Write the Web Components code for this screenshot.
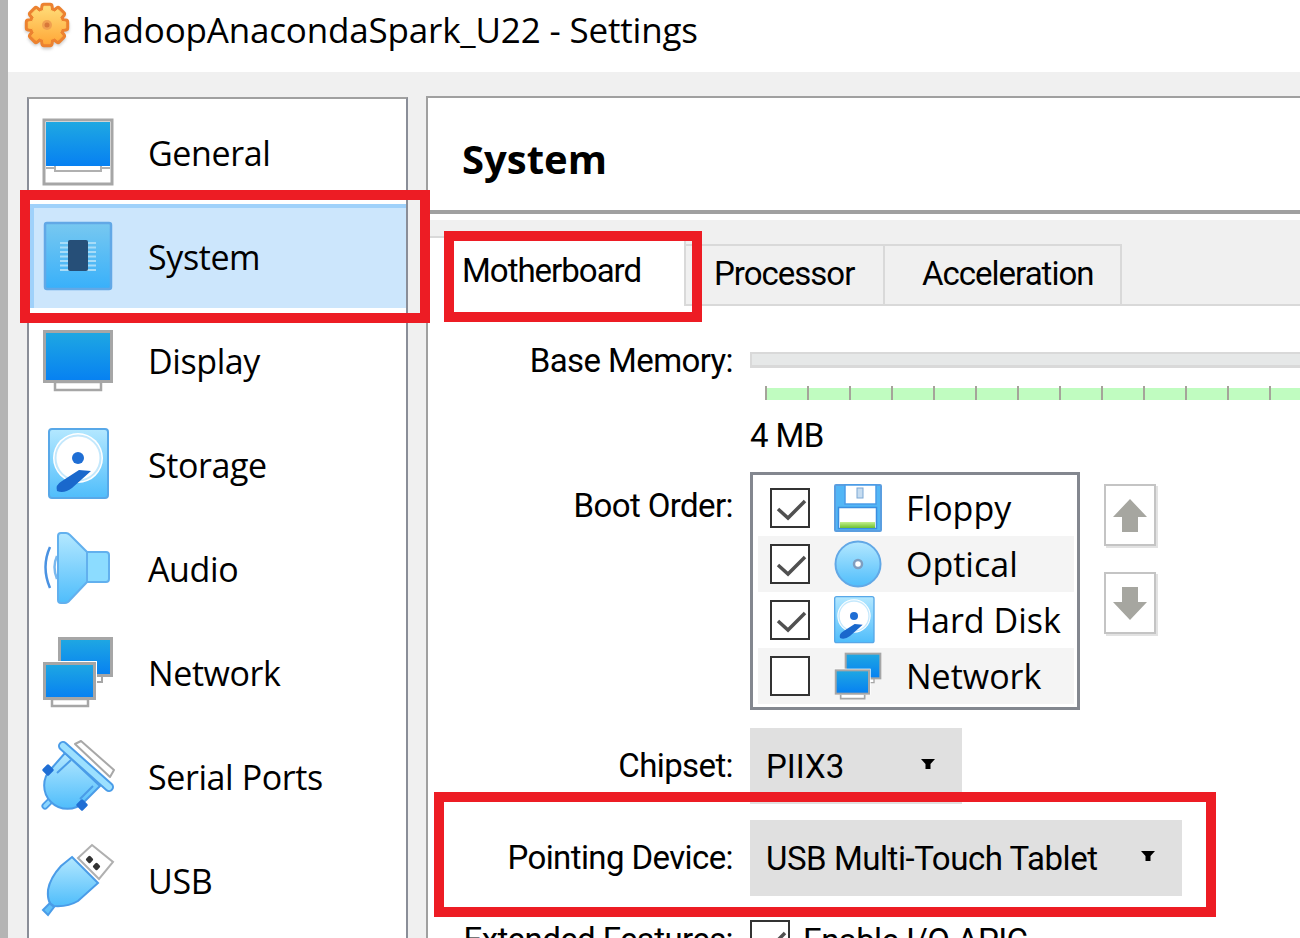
<!DOCTYPE html>
<html>
<head>
<meta charset="utf-8">
<title>hadoopAnacondaSpark_U22 - Settings</title>
<style>
  html, body { margin: 0; padding: 0; }
  body {
    width: 1300px; height: 938px; overflow: hidden;
    font-family: "Open Sans", "Noto Sans", "Liberation Sans", sans-serif;
    font-size: 34px; color: #000;
  }
  span[slot="title"] { font-size: 35px; letter-spacing: -.18px; }
</style>
</head>
<body>

<vb-window>
  <vb-icon slot="logo" name="gear" size="48" style="margin-bottom:9px"></vb-icon>
  <span slot="title">hadoopAnacondaSpark_U22 - Settings</span>

  <vb-sidebar slot="nav">
    <vb-nav-item icon="general">General</vb-nav-item>
    <vb-nav-item icon="system" selected>System</vb-nav-item>
    <vb-nav-item icon="display">Display</vb-nav-item>
    <vb-nav-item icon="storage">Storage</vb-nav-item>
    <vb-nav-item icon="audio">Audio</vb-nav-item>
    <vb-nav-item icon="network">Network</vb-nav-item>
    <vb-nav-item icon="serial">Serial Ports</vb-nav-item>
    <vb-nav-item icon="usb">USB</vb-nav-item>
  </vb-sidebar>

  <vb-pane slot="main" heading="System">
    <vb-tabs>
      <vb-tab selected style="width:258px;padding-left:34px">Motherboard</vb-tab>
      <vb-tab style="width:199px;padding-left:28px">Processor</vb-tab>
      <vb-tab style="width:237px;padding-left:37px">Acceleration</vb-tab>
    </vb-tabs>
    <vb-form>
      <vb-row label="Base Memory:" label-top="-11" style="margin-top:46px">
        <vb-slider>4 MB</vb-slider>
      </vb-row>
      <vb-row label="Boot Order:" label-top="14" style="margin-top:14px">
        <vb-boot-order>
          <vb-boot-item checked icon="floppy">Floppy</vb-boot-item>
          <vb-boot-item checked icon="optical" alt>Optical</vb-boot-item>
          <vb-boot-item checked icon="harddisk">Hard Disk</vb-boot-item>
          <vb-boot-item icon="network" alt>Network</vb-boot-item>
        </vb-boot-order>
      </vb-row>
      <vb-row label="Chipset:" label-top="18" style="margin-top:18px">
        <vb-combo style="width:212px;letter-spacing:0">PIIX3</vb-combo>
      </vb-row>
      <vb-row label="Pointing Device:" label-top="18" style="margin-top:16px">
        <vb-combo style="width:432px;letter-spacing:-.45px">USB Multi-Touch Tablet</vb-combo>
      </vb-row>
      <vb-row label="Extended Features:" label-top="0" style="margin-top:24px">
        <vb-check checked>Enable I/O APIC</vb-check>
      </vb-row>
    </vb-form>
  </vb-pane>

  <vb-callout style="left:20px;top:190px;width:410px;height:133px"></vb-callout>
  <vb-callout style="left:444px;top:231px;width:258px;height:91px"></vb-callout>
  <vb-callout style="left:434px;top:792px;width:782px;height:125px"></vb-callout>
</vb-window>

<script>
  // shared gradients for the VirtualBox style icons
  const GRADS = `
    <defs>
      <linearGradient id="screen" x1="0" y1="0" x2="0" y2="1"><stop offset="0" stop-color="#1fa8e2"/><stop offset="1" stop-color="#0680f2"/></linearGradient>
      <linearGradient id="sky" x1="0" y1="0" x2="0" y2="1"><stop offset="0" stop-color="#b4e8ff"/><stop offset="1" stop-color="#4fbdfb"/></linearGradient>
      <linearGradient id="tile" x1="0" y1="0" x2="0" y2="1"><stop offset="0" stop-color="#78c8f0"/><stop offset="1" stop-color="#38b0fa"/></linearGradient>
      <linearGradient id="green" x1="0" y1="0" x2="0" y2="1"><stop offset="0" stop-color="#c4f08c"/><stop offset="1" stop-color="#6cc030"/></linearGradient>
      <linearGradient id="gold" x1="0" y1="0" x2="0" y2="1"><stop offset="0" stop-color="#ffdc78"/><stop offset="1" stop-color="#ffa838"/></linearGradient>
      <filter id="soft" x="-20%" y="-20%" width="140%" height="140%"><feGaussianBlur stdDeviation="1.6"/></filter>
    </defs>`;

  function monitor(x, y, w, h) {
    return `<rect x="${x+1.5}" y="${y+1.5}" width="${w-3}" height="${h-3}" fill="url(#screen)" stroke="#a6a6a6" stroke-width="3"/>`;
  }

  // 8 toothed cog outline around 24,24
  function cog(cx, cy, outer, inner) {
    const pts = [];
    for (let i = 0; i < 8; i++) {
      const a = i * Math.PI / 4 - Math.PI / 2;
      const step = Math.PI / 8;
      [[outer, -step * .42], [outer, step * .42], [inner, step * .62], [inner, step * 1.38]].forEach(p => {
        pts.push((cx + p[0] * Math.cos(a + p[1])).toFixed(1) + "," + (cy + p[0] * Math.sin(a + p[1])).toFixed(1));
      });
    }
    return pts.join(" ");
  }

  const ICONS = {
    gear: [48, `
      <polygon points="${cog(24, 26, 20, 16)}" fill="#999" stroke="#999" stroke-width="5" stroke-linejoin="round" opacity=".5" filter="url(#soft)"/>
      <polygon points="${cog(24, 24, 19, 15)}" fill="#ec8230" stroke="#ec8230" stroke-width="7" stroke-linejoin="round"/>
      <polygon points="${cog(24, 24, 19, 15)}" fill="url(#gold)" stroke="url(#gold)" stroke-width="1" stroke-linejoin="round"/>
      <circle cx="24" cy="24" r="5" fill="#f0a050"/><circle cx="24" cy="24" r="2.500" fill="#d8783a"/>`],
    general: [72, `
      <path d="M2 4h68v64H2z" fill="#fff" stroke="#a6a6a6" stroke-width="3"/>
      <rect x="4" y="6" width="64" height="44" fill="url(#screen)"/>
      <path d="M13 50v5h46v-5M4 52h9M59 52h9" fill="none" stroke="#b0b0b0" stroke-width="2"/>`],
    system: [72, `
      <rect x="3" y="3" width="66" height="66" rx="2" fill="url(#tile)" stroke="#62a8e6" stroke-width="2.5"/>
      <path d="M18 23h36M18 27.5h36M18 32h36M18 36.500h36M18 41h36M18 45.500h36M18 50h36" stroke="#a8dcf8" stroke-width="2.2"/>
      <rect x="26" y="20" width="20" height="31" rx="2" fill="#264f78"/>`],
    display: [72, `
      <path d="M13 58h46v8H13z" fill="#fff" stroke="#a6a6a6" stroke-width="2.500"/>
      ${monitor(1, 6, 70, 53)}`],
    storage: [72, `
      <rect x="7" y="1" width="59" height="69" rx="3" fill="url(#sky)" stroke="#58a8e8" stroke-width="2"/>
      <circle cx="36" cy="30" r="25" fill="#fff"/>
      <circle cx="36" cy="30" r="22.500" fill="none" stroke="#c4e8fc" stroke-width="2"/>
      <circle cx="36" cy="30" r="6" fill="#1f6ed4"/>
      <path d="M37 42 L49 43 L30 60 Q22 66 15 63 Q13 57 20 53 Z" fill="#1a68cc"/>`],
    harddisk: [72, `
      <rect x="1" y="1" width="59" height="69" rx="3" fill="url(#sky)" stroke="#58a8e8" stroke-width="2"/>
      <circle cx="30" cy="30" r="25" fill="#fff"/>
      <circle cx="30" cy="30" r="22.500" fill="none" stroke="#c4e8fc" stroke-width="2"/>
      <circle cx="30" cy="30" r="6" fill="#1f6ed4"/>
      <path d="M31 42 L43 43 L24 60 Q16 66 9 63 Q7 57 14 53 Z" fill="#1a68cc"/>`],
    audio: [72, `
      <path d="M8 15 Q-1 35 8 56" fill="none" stroke="#4a92e2" stroke-width="2.500"/>
      <path d="M15 24 Q10 35 15 47" fill="none" stroke="#7ab8ee" stroke-width="2.500"/>
      <path d="M45 20 H64 Q67 20 67 23 V47 Q67 50 64 50 H45 Z" fill="#8cdcff" stroke="#62b0ee" stroke-width="2"/>
      <path d="M16 4 Q16 1 19 1 H24 Q26 1 28 3 L45 20 V50 L28 68 Q26 71 23 71 H19 Q16 71 16 68 Z" fill="url(#sky)" stroke="#62b0ee" stroke-width="2"/>`],
    network: [72, `
      <path d="M42 40h18v6H42z" fill="#fff" stroke="#a6a6a6" stroke-width="2"/>
      ${monitor(16, 1, 55, 40)}
      <path d="M10 63h36v7H10z" fill="#fff" stroke="#a6a6a6" stroke-width="2.500"/>
      <rect x="0" y="25" width="55" height="39" fill="#fff"/>
      ${monitor(1, 26, 53, 38)}`],
    serial: [72, `
      <path d="M33 4 L39 1 L72 30 L68 37 Z" fill="#fff" stroke="#a8a8a8" stroke-width="2" stroke-linejoin="round"/>
      <path d="M11 58 L3 66" stroke="#4a9ce8" stroke-width="7" stroke-linecap="round"/>
      <path d="M11 58 L3 66" stroke="#8cd6ff" stroke-width="3.500" stroke-linecap="round"/>
      <path d="M9 29 L23 13 L58 46 L42 62 A18 18 0 0 1 9 29 Z" fill="url(#sky)" stroke="#4a9ce8" stroke-width="2"/>
      <path d="M15 33 L29 20 M51 46 L38 59" fill="none" stroke="#4a9ce8" stroke-width="2"/>
      <path d="M21 6 L67 47" stroke="#4a9ce8" stroke-width="10" stroke-linecap="round"/>
      <path d="M21 6 L67 47" stroke="#9ce0ff" stroke-width="6" stroke-linecap="round"/>
      <rect x="1.500" y="25.500" width="9" height="9" rx="1.500" fill="#1f6ed4" transform="rotate(45 6 30)"/>
      <rect x="35.500" y="60.500" width="9" height="9" rx="1.500" fill="#1f6ed4" transform="rotate(45 40 65)"/>`],
    usb: [72, `
      <path d="M50 1 L71 18 L57 35 L36 14 Z" fill="#fff" stroke="#b0b0b0" stroke-width="2"/>
      <rect x="44.500" y="12.500" width="6" height="6" rx="1.500" fill="#333" transform="rotate(45 47.500 15.500)"/>
      <rect x="51.500" y="19.500" width="6" height="6" rx="1.500" fill="#333" transform="rotate(45 54.500 22.500)"/>
      <path d="M1 66 L8 59 L12 63 L6 71 Z" fill="#60c0f8" stroke="#4a9ce8" stroke-width="2"/>
      <path d="M30 13 L56 39 L36 57 Q26 63 12 62 Q5 60 6 46 Q8 34 19 22 Z" fill="url(#sky)" stroke="#4a9ce8" stroke-width="2"/>`],
    floppy: [48, `
      <rect x="1" y="1" width="46" height="46" rx="1" fill="#52b6f6" stroke="#5a9ee0" stroke-width="2"/>
      <rect x="11" y="1" width="31" height="19" fill="#fff" stroke="#4a9ce8" stroke-width="1.500"/>
      <rect x="23" y="4" width="6" height="10" fill="#c6dcf0" stroke="#7ca8d4" stroke-width="1"/>
      <rect x="4.500" y="23.500" width="38" height="21" fill="#fff" stroke="#3a8ee0" stroke-width="1.500"/>
      <rect x="6" y="38" width="35" height="6" fill="url(#green)"/>`],
    optical: [48, `
      <circle cx="24" cy="24" r="22.500" fill="url(#sky)" stroke="#62a8e6" stroke-width="2"/>
      <circle cx="24" cy="24" r="4" fill="#fff" stroke="#7f9ec0" stroke-width="2.500"/>`]
  };

  class VbIcon extends HTMLElement {
    static observedAttributes = ["name"];
    constructor() {
      super();
      this.attachShadow({ mode: "open" });
    }
    attributeChangedCallback() { this.draw(); }
    connectedCallback() { this.draw(); }
    draw() {
      const entry = ICONS[this.getAttribute("name")];
      if (!entry) return;
      const size = this.getAttribute("size") || 72;
      this.shadowRoot.innerHTML = `
        <style>:host { display: block; width: ${size}px; height: ${size}px; flex: none; } svg { display: block; overflow: visible; }</style>
        <svg width="${size}" height="${size}" viewBox="0 0 ${entry[0]} ${entry[0]}">${GRADS}${entry[1]}</svg>`;
    }
  }
  customElements.define("vb-icon", VbIcon);

  class VbWindow extends HTMLElement {
    constructor() {
      super();
      this.attachShadow({ mode: "open" }).innerHTML = `
        <style>
          :host {
            display: flex; flex-direction: column; position: relative;
            box-sizing: border-box; width: 1300px; height: 938px; overflow: hidden;
            border-left: 8px solid #b4b4b4; background: #f0f0f0;
          }
          #bar { display: flex; align-items: center; gap: 11px; height: 72px; flex: none; padding: 0 0 14px 15px; box-sizing: border-box; background: #fff; }
          #body { display: flex; flex: 1; min-height: 0; gap: 18px; padding: 25px 0 0 19px; }
        </style>
        <div id="bar"><slot name="logo"></slot><slot name="title"></slot></div>
        <div id="body"><slot name="nav"></slot><slot name="main"></slot></div>
        <slot></slot>`;
    }
  }
  customElements.define("vb-window", VbWindow);

  class VbSidebar extends HTMLElement {
    constructor() {
      super();
      this.attachShadow({ mode: "open" }).innerHTML = `
        <style>
          :host {
            display: block; box-sizing: border-box; width: 381px; flex: none;
            padding: 1px 0 0 1px; background: #fff; letter-spacing: -.4px;
            border: 2px solid #8a8e98; border-top-color: #a0a0a0; border-bottom: 0;
            overflow: hidden;
          }
        </style>
        <slot></slot>`;
    }
  }
  customElements.define("vb-sidebar", VbSidebar);

  class VbNavItem extends HTMLElement {
    constructor() {
      super();
      this.attachShadow({ mode: "open" }).innerHTML = `
        <style>
          :host { display: flex; align-items: center; gap: 34px; height: 104px; padding-left: 12px; box-sizing: border-box; }
          :host([selected]) { background: #cce6fc; box-shadow: inset 4px 4px 0 #9fd1fa; }
          #text { padding-top: 2px; }
        </style>
        <vb-icon></vb-icon><div id="text"><slot></slot></div>`;
    }
    connectedCallback() {
      this.shadowRoot.querySelector("vb-icon").setAttribute("name", this.getAttribute("icon"));
    }
  }
  customElements.define("vb-nav-item", VbNavItem);

  class VbPane extends HTMLElement {
    constructor() {
      super();
      this.attachShadow({ mode: "open" }).innerHTML = `
        <style>
          :host {
            display: flex; flex-direction: column; flex: 1; min-width: 0; overflow: hidden; margin-top: -1px;
            background: #fff; border-left: 2px solid #a0a0a0; border-top: 2px solid #a0a0a0;
          }
          h2 {
            margin: 0; height: 116px; box-sizing: border-box; flex: none;
            border-bottom: 4px solid #a0a0a0; padding-left: 34px;
            font-size: 40px; font-weight: 700; line-height: 122px; color: #000;
          }
          #gap { height: 6px; flex: none; }
        </style>
        <h2></h2><div id="gap"></div><slot></slot>`;
    }
    connectedCallback() {
      this.shadowRoot.querySelector("h2").textContent = this.getAttribute("heading");
    }
  }
  customElements.define("vb-pane", VbPane);

  class VbTabs extends HTMLElement {
    constructor() {
      super();
      this.attachShadow({ mode: "open" }).innerHTML = `
        <style>
          :host {
            display: flex; align-items: flex-end; height: 86px; box-sizing: border-box; flex: none;
            background: #f0f0f0; border-bottom: 2px solid #d9d9d9;
            font-family: Roboto, "Open Sans", sans-serif; font-size: 33px; letter-spacing: -1px;
          }
        </style>
        <slot></slot>`;
    }
  }
  customElements.define("vb-tabs", VbTabs);

  class VbTab extends HTMLElement {
    constructor() {
      super();
      this.attachShadow({ mode: "open" }).innerHTML = `
        <style>
          :host {
            display: block; box-sizing: border-box; height: 60px; line-height: 56px; white-space: nowrap;
            border: 2px solid #d9d9d9; border-left: 0; border-bottom: 0; flex: none;
          }
          :host([selected]) {
            height: 70px; margin-bottom: -2px; line-height: 66px; background: #fff; position: relative;
          }
        </style>
        <slot></slot>`;
    }
  }
  customElements.define("vb-tab", VbTab);

  class VbForm extends HTMLElement {
    constructor() {
      super();
      this.attachShadow({ mode: "open" }).innerHTML = `
        <style>:host { display: flex; flex-direction: column; font-family: Roboto, "Open Sans", sans-serif; font-size: 33px; letter-spacing: -.6px; }</style><slot></slot>`;
    }
  }
  customElements.define("vb-form", VbForm);

  class VbRow extends HTMLElement {
    constructor() {
      super();
      this.attachShadow({ mode: "open" }).innerHTML = `
        <style>
          :host { display: grid; grid-template-columns: 305px minmax(0, 1fr); column-gap: 17px; align-items: start; }
          #label { text-align: right; line-height: 40px; white-space: nowrap; }
        </style>
        <div id="label"></div><div><slot></slot></div>`;
    }
    connectedCallback() {
      const l = this.shadowRoot.getElementById("label");
      l.textContent = this.getAttribute("label");
      l.style.marginTop = this.getAttribute("label-top") + "px";
    }
  }
  customElements.define("vb-row", VbRow);

  class VbSlider extends HTMLElement {
    constructor() {
      super();
      let ticks = "";
      for (let i = 0; i < 14; i++) ticks += `<i></i>`;
      this.attachShadow({ mode: "open" }).innerHTML = `
        <style>
          :host { display: block; }
          #groove { height: 16px; box-sizing: border-box; margin-right: -4px; background: #e6e8e8; border: 2px solid #d9d9d9; border-bottom-width: 3px; }
          #ticks { display: flex; height: 14px; margin: 18px 0 0 15px; }
          i { display: block; flex: none; width: 42px; box-sizing: border-box; border-left: 2px solid #a5a39a; background: linear-gradient(transparent 2px, #c0fcc0 2px); }
          #value { line-height: 44px; height: 44px; margin-top: 14px; }
        </style>
        <div id="groove"></div><div id="ticks">${ticks}</div><div id="value"><slot></slot></div>`;
    }
  }
  customElements.define("vb-slider", VbSlider);

  const TICK = `<svg width="36" height="36" viewBox="0 0 36 36"><path d="M6 19 L16 28 L33 11" fill="none" stroke="#505050" stroke-width="3.500"/></svg>`;

  class VbBootOrder extends HTMLElement {
    constructor() {
      super();
      this.attachShadow({ mode: "open" }).innerHTML = `
        <style>
          :host { display: flex; align-items: flex-start; gap: 24px; font-family: "Open Sans", sans-serif; font-size: 34px; letter-spacing: 0; }
          #list {
            width: 330px; height: 238px; box-sizing: border-box; padding: 5px 3px 3px 5px; background: #fff;
            border: 3px solid #83878f; border-top-width: 3px;
          }
          #btns { display: flex; flex-direction: column; gap: 26px; margin-top: 12px; }
          button {
            display: block; width: 52px; height: 62px; padding: 0; box-sizing: border-box; background: #fff;
            border: 2px solid #c4c4c4; box-shadow: 2px 2px 0 #e2e2e2;
          }
          svg { display: block; margin: 0 0 0 7px; }
        </style>
        <div id="list"><slot></slot></div>
        <div id="btns">
          <button><svg width="34" height="33" viewBox="0 0 34 33"><path d="M17 0 L34 18 H25 V33 H9 V18 H0 Z" fill="#a6a6a0"/></svg></button>
          <button><svg width="34" height="33" viewBox="0 0 34 33"><path d="M9 0 H25 V15 H34 L17 33 L0 15 H9 Z" fill="#a6a6a0"/></svg></button>
        </div>`;
    }
  }
  customElements.define("vb-boot-order", VbBootOrder);

  class VbBootItem extends HTMLElement {
    constructor() {
      super();
      this.attachShadow({ mode: "open" }).innerHTML = `
        <style>
          :host { display: flex; align-items: center; height: 56px; padding-left: 12px; box-sizing: border-box; white-space: nowrap; }
          :host([alt]) { background: #f4f4f4; }
          #box { width: 40px; height: 40px; box-sizing: border-box; border: 2px solid #333; background: #fff; flex: none; }
          svg { display: block; }
          vb-icon { margin: 0 24px 0 24px; }
        </style>
        <div id="box"></div><vb-icon size="48"></vb-icon><slot></slot>`;
    }
    connectedCallback() {
      if (this.hasAttribute("checked")) this.shadowRoot.getElementById("box").innerHTML = TICK;
      this.shadowRoot.querySelector("vb-icon").setAttribute("name", this.getAttribute("icon"));
    }
  }
  customElements.define("vb-boot-item", VbBootItem);

  class VbCombo extends HTMLElement {
    constructor() {
      super();
      this.attachShadow({ mode: "open" }).innerHTML = `
        <style>
          :host {
            display: flex; align-items: center; justify-content: space-between; box-sizing: border-box;
            height: 76px; padding: 0 27px 0 16px; background: #e0e0e0; white-space: nowrap;
          }
          svg { display: block; margin-top: -4px; }
        </style>
        <span><slot></slot></span>
        <svg width="14" height="10" viewBox="0 0 14 10"><path d="M0 0H14L9.500 5V10H4.500V5Z" fill="#000"/></svg>`;
    }
  }
  customElements.define("vb-combo", VbCombo);

  class VbCheck extends HTMLElement {
    constructor() {
      super();
      this.attachShadow({ mode: "open" }).innerHTML = `
        <style>
          :host { display: flex; align-items: center; gap: 13px; white-space: nowrap; }
          #box { width: 40px; height: 40px; box-sizing: border-box; border: 2px solid #333; background: #fff; flex: none; }
          svg { display: block; }
        </style>
        <div id="box"></div><slot></slot>`;
    }
    connectedCallback() {
      if (this.hasAttribute("checked")) this.shadowRoot.getElementById("box").innerHTML = TICK;
    }
  }
  customElements.define("vb-check", VbCheck);

  class VbCallout extends HTMLElement {
    constructor() {
      super();
      this.attachShadow({ mode: "open" }).innerHTML = `
        <style>
          :host { display: block; position: absolute; box-sizing: border-box; border: 10px solid #ed1c24; margin-left: -8px; pointer-events: none; }
        </style>`;
    }
  }
  customElements.define("vb-callout", VbCallout);
</script>
</body>
</html>
